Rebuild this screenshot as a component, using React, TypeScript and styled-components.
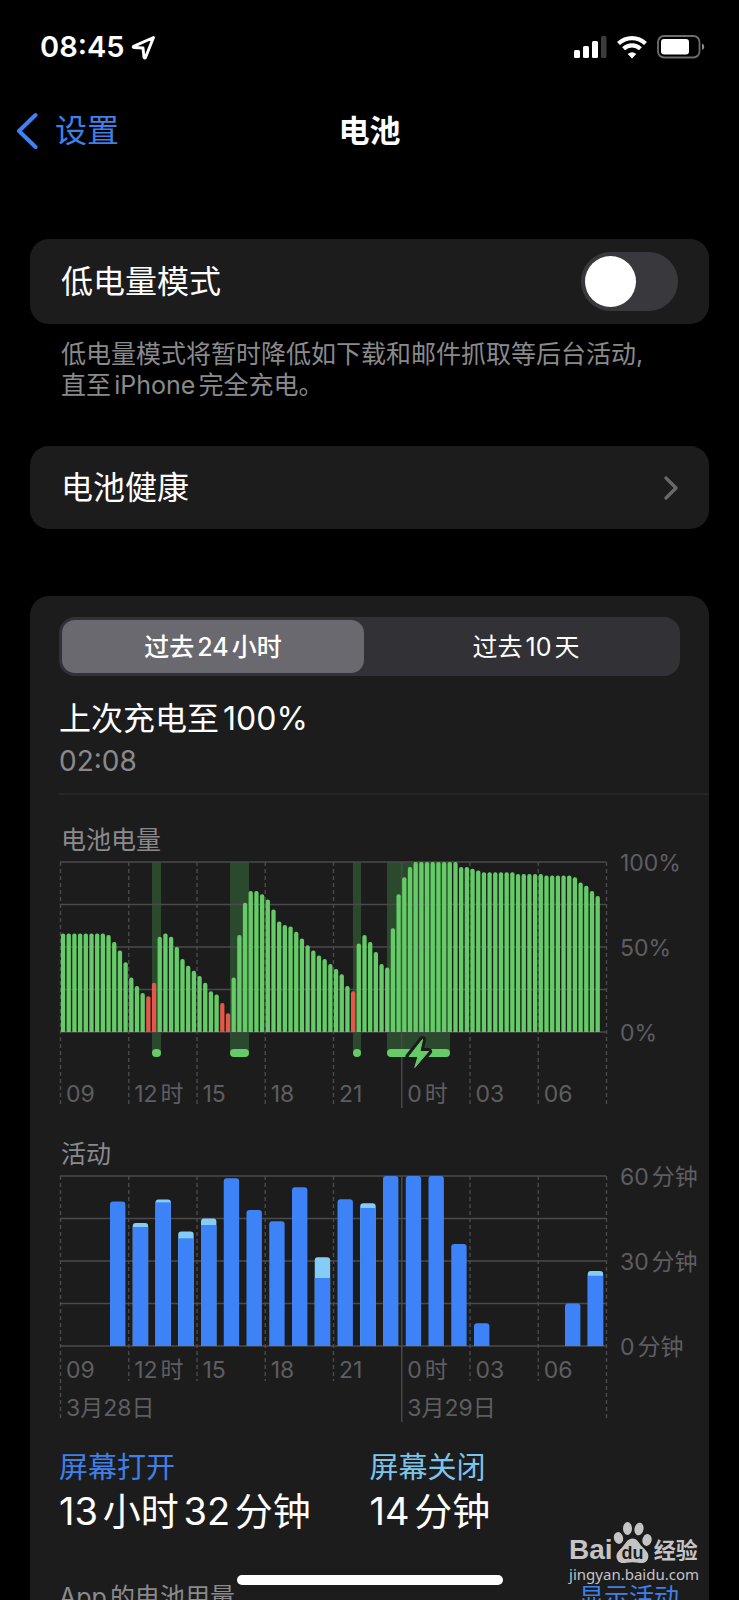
import React, { useState } from 'react';
import styled, { createGlobalStyle } from 'styled-components';

const GlobalStyle = createGlobalStyle`
  *, *::before, *::after { box-sizing: border-box; }
  html, body { margin: 0; background: #000; }
  body, button, input {
    font-family: Inter, "Noto Sans CJK SC", sans-serif;
  }
  button { border: 0; padding: 0; background: none; color: inherit; cursor: pointer; }
  a { text-decoration: none; color: inherit; }
`;

const color = {
  card: '#1c1c1d',
  text: '#ffffff',
  muted: '#8a8a8d',
  axis: '#5e5e61',
  grid: '#4a4a4c',
  blue: '#3d83f7',
  link: '#3f80e8',
  cyan: '#84cdf8',
  green: '#65cb67',
  band: '#2b4a2d',
  red: '#e4584a',
};

const Screen = styled.div`
  position: relative;
  height: 100vh;
  overflow: hidden;
  background: #000;
  color: ${color.text};
  text-autospace: normal;
`;

const StatusBar = styled.div`
  display: flex;
  align-items: center;
  justify-content: space-between;
  height: 94px;
  padding: 0 34px 0 40px;
`;

const Clock = styled.div`
  display: flex;
  align-items: center;
  gap: 6px;
  font-size: 29px;
  line-height: 44px;
  font-weight: 600;
`;

const StatusIcons = styled.div`
  display: flex;
  align-items: center;
  gap: 10px;
`;

const NavBar = styled.header`
  display: grid;
  grid-template-columns: 1fr auto 1fr;
  align-items: center;
  height: 74px;
  padding: 0 16px;
`;

const BackLink = styled.a`
  display: flex;
  align-items: center;
  gap: 17px;
  font-size: 32px;
  line-height: 44px;
  && { color: ${color.link}; }
`;

const PageTitle = styled.h1`
  margin: 0;
  font-size: 31px;
  line-height: 44px;
  font-weight: 600;
`;

const Content = styled.main`
  padding: 71px 30px 0;
`;

const Card = styled.section`
  border-radius: 19px;
  background: ${color.card};
`;

const SwitchRow = styled.label`
  display: flex;
  align-items: center;
  justify-content: space-between;
  height: 85px;
  padding: 0 31px;
  font-size: 32px;
  line-height: 44px;
`;

const Switch = styled.input`
  appearance: none;
  display: flex;
  width: 97px;
  height: 59px;
  margin: 0;
  padding: 4px;
  border-radius: 30px;
  background: #39393d;
  cursor: pointer;

  &::before {
    content: '';
    width: 51px;
    height: 51px;
    border-radius: 50%;
    background: #fff;
  }
  &:checked { background: ${color.green}; justify-content: flex-end; }
`;

const Footnote = styled.p`
  margin: 15px 31px 45px;
  font-size: 25px;
  line-height: 31px;
  color: ${color.muted};
`;

const LinkRow = styled.a`
  display: flex;
  align-items: center;
  justify-content: space-between;
  height: 83px;
  padding: 0 31px;
  font-size: 32px;
  line-height: 44px;
`;

const UsageCard = styled(Card)`
  margin-top: 67px;
  padding: 21px 0 40px 29px;
`;

const Segments = styled.div`
  display: grid;
  grid-template-columns: 1fr 1fr;
  gap: 11px;
  height: 59px;
  margin-right: 29px;
  padding: 3px;
  border-radius: 16px;
  background: #323236;
`;

const Segment = styled.button<{ $active: boolean }>`
  border-radius: 13px;
  font-size: 25px;
  line-height: 30px;
  font-weight: ${p => (p.$active ? 500 : 400)};
  background: ${p => (p.$active ? '#6a696f' : 'transparent')};
  text-autospace: normal;
`;

const LastCharge = styled.div`
  margin-top: 22px;
  padding-bottom: 11px;
  border-bottom: 2px solid #262628;
  line-height: 42px;
`;

const ChargeTitle = styled.div`
  font-size: 32px;
`;

const ChargeTime = styled.div`
  font-size: 28px;
  color: ${color.muted};
`;

const ChartTitle = styled.h2<{ $gap: number }>`
  margin: ${p => p.$gap}px 0 0 2px;
  font-size: 25px;
  line-height: 30px;
  font-weight: 400;
  color: ${color.muted};
`;

const ChartSvg = styled.svg`
  display: block;
  width: 100%;
  height: auto;
  overflow: visible;
  text {
    font-family: Inter, "Noto Sans CJK SC", sans-serif;
    font-size: 23px;
    fill: ${color.axis};
  }
`;

const DayLabel = styled.text`
  text-autospace: no-autospace;
`;

const Totals = styled.div`
  display: grid;
  grid-template-columns: 1fr 1fr;
  margin: 19px 29px 0 0;
`;

const TotalLabel = styled.div<{ $tone: string }>`
  font-size: 29px;
  line-height: 40px;
  color: ${p => p.$tone};
`;

const TotalValue = styled.div`
  font-size: 38px;
  line-height: 46px;
`;

const ListHeader = styled.div`
  display: flex;
  justify-content: space-between;
  margin: 48px 30px 0 0;
  font-size: 25px;
  line-height: 30px;
  color: ${color.muted};
`;

const TextButton = styled.button`
  font-size: 25px;
  line-height: 30px;
  color: ${color.link};
`;

const HomeIndicator = styled.div`
  position: absolute;
  left: 50%;
  bottom: 15px;
  width: 36%;
  height: 10px;
  border-radius: 5px;
  background: #fff;
  transform: translateX(-50%);
`;

const Watermark = styled.div`
  position: absolute;
  right: 40px;
  bottom: 16px;
  color: #c4c4c4;
`;

const WatermarkLogo = styled.div`
  display: flex;
  align-items: flex-end;
  line-height: 28px;
  font-weight: 700;
`;

const LogoLatin = styled.span`
  font-family: "Liberation Sans", sans-serif;
  font-size: 28px;
`;

const LogoHan = styled.span`
  margin-left: 2px;
  font-size: 22px;
`;

const WatermarkUrl = styled.div`
  font-family: "Noto Sans", sans-serif;
  font-size: 15px;
  line-height: 20px;
`;

const PLOT_LEFT = 1;
const PLOT_WIDTH = 546;
const PLOT_HEIGHT = 170;
const TICK = PLOT_WIDTH / 8;
const HOURS = ['09', '12时', '15', '18', '21', '0时', '03', '06'];

const LEVELS = [
  58, 58, 58, 58, 58, 58, 58, 58, 57, 53, 48, 41, 32, 27, 23, 21, 29, 56, 58, 56, 50, 43, 39, 36,
  33, 29, 24, 22, 17, 11, 32, 57, 76, 83, 83, 81, 78, 72, 65, 63, 62, 59, 55, 51, 48, 45, 43, 40,
  37, 34, 27, 24, 52, 57, 53, 47, 40, 38, 61, 81, 91, 97, 100, 100, 100, 100, 100, 100, 100, 100,
  97, 97, 96, 95, 94, 94, 94, 94, 94, 94, 93, 93, 93, 93, 93, 92, 92, 92, 92, 92, 91, 88, 86, 83, 80,
];
const LOW = new Set([15, 16, 28, 29, 51]);

const CHARGES = [
  { x: 93, width: 9 },
  { x: 171, width: 19 },
  { x: 294, width: 8 },
  { x: 328, width: 63 },
];

// Minutes per hour slot: total, and the part with the screen on.
const ACTIVITY: [slot: number, total: number, on: number][] = [
  [2, 51, 51], [3, 43.4, 42], [4, 51.7, 50.7], [5, 40.4, 38], [6, 45, 42.7], [7, 59.2, 59.2],
  [8, 48, 48], [9, 44, 44], [10, 56, 56], [11, 31.3, 24], [12, 51.8, 51.8], [13, 50.4, 48.7],
  [14, 60, 60], [15, 60, 60], [16, 60, 60], [17, 36, 36], [18, 8, 8], [22, 15, 15], [23, 26.5, 24.8],
];

function roundedTop(x: number, y: number, w: number, h: number, r: number) {
  return `M${x} ${y + h}V${y + r}q0 ${-r} ${r} ${-r}h${w - 2 * r}q${r} 0 ${r} ${r}V${y + h}z`;
}

function Grid({ top, tickEnd, edgeEnd, dayEnd }: { top: number; tickEnd: number; edgeEnd: number; dayEnd: number }) {
  return (
    <g stroke={color.grid} strokeWidth={1.4}>
      {[0, 1, 2, 3, 4].map(i => (
        <line
          key={i}
          x1={PLOT_LEFT}
          x2={PLOT_LEFT + PLOT_WIDTH}
          y1={top + (i * PLOT_HEIGHT) / 4}
          y2={top + (i * PLOT_HEIGHT) / 4}
        />
      ))}
      {Array.from({ length: 9 }, (_, i) => {
        const x = PLOT_LEFT + 0.5 + i * TICK;
        const end = i === 5 ? dayEnd : i === 0 || i === 8 ? edgeEnd : tickEnd;
        return <line key={i} x1={x} x2={x} y1={top} y2={end} strokeDasharray={i === 5 ? undefined : '4 3'} />;
      })}
    </g>
  );
}

function HourLabels({ y }: { y: number }) {
  return (
    <>
      {HOURS.map((h, i) => (
        <text key={h} x={PLOT_LEFT + 6 + i * TICK} y={y}>{h}</text>
      ))}
    </>
  );
}

function ValueLabels({ top, labels }: { top: number; labels: string[] }) {
  return (
    <>
      {labels.map((l, i) => (
        <text key={l} x={561} y={top + 9 + (i * PLOT_HEIGHT) / 2}>{l}</text>
      ))}
    </>
  );
}

function BatteryChart() {
  const top = 7;
  const base = top + PLOT_HEIGHT;
  return (
    <ChartSvg viewBox="0 0 650 260" role="img" aria-label="电池电量">
      {CHARGES.map(c => (
        <rect key={c.x} x={c.x} y={top} width={c.width} height={base - top + 21} fill={color.band} />
      ))}
      <Grid top={top} tickEnd={250} edgeEnd={250} dayEnd={253} />
      {LEVELS.map((v, i) => {
        const h = (v / 100) * PLOT_HEIGHT;
        return (
          <path
            key={i}
            d={roundedTop(PLOT_LEFT + 0.9 + (i * TICK) / 12, base - h, 4.3, h, 2)}
            fill={LOW.has(i) ? color.red : color.green}
          />
        );
      })}
      {CHARGES.map(c => (
        <rect key={c.x} x={c.x} y={194} width={c.width} height={8} rx={4} fill={color.green} />
      ))}
      <path
        d="M363.5 184.5L350 201.500h9l-3.200 11L369.500 196.500h-8.500z"
        fill={color.green}
        stroke={color.card}
        strokeWidth={7}
        strokeLinejoin="round"
      />
      <path
        d="M363.5 184.5L350 201.500h9l-3.200 11L369.500 196.500h-8.500z"
        fill={color.green}
        stroke={color.green}
        strokeWidth={1}
        strokeLinejoin="round"
      />
      <HourLabels y={247} />
      <ValueLabels top={top} labels={['100%', '50%', '0%']} />
    </ChartSvg>
  );
}

function ActivityChart() {
  const top = 7;
  const base = top + PLOT_HEIGHT;
  const scale = PLOT_HEIGHT / 60;
  return (
    <ChartSvg viewBox="0 0 650 260" role="img" aria-label="活动">
      <Grid top={top} tickEnd={212} edgeEnd={249} dayEnd={253} />
      {ACTIVITY.map(([slot, total, on]) => {
        const x = PLOT_LEFT + 4.5 + (slot * TICK) / 3;
        return (
          <g key={slot}>
            <path
              d={roundedTop(x, base - total * scale, 15.4, total * scale, 3)}
              fill={total > on ? color.cyan : color.blue}
            />
            {total > on && (
              <rect x={x} y={base - on * scale} width={15.4} height={on * scale} fill={color.blue} />
            )}
          </g>
        );
      })}
      <HourLabels y={209} />
      <DayLabel x={PLOT_LEFT + 6} y={247}>3月28日</DayLabel>
      <DayLabel x={PLOT_LEFT + 6 + 5 * TICK} y={247}>3月29日</DayLabel>
      <ValueLabels top={top} labels={['60分钟', '30分钟', '0分钟']} />
    </ChartSvg>
  );
}

function LocationIcon() {
  return (
    <svg width="25" height="25" viewBox="0 0 25 25" aria-hidden="true">
      <path
        d="M22.5 2.500L2.500 11.300Q1.800 12.300 3 12.500L12 13L13 22.300Q13.600 23.600 14.500 22.500z"
        fill="none"
        stroke="#fff"
        strokeWidth="2.900"
        strokeLinejoin="round"
      />
    </svg>
  );
}

function SignalIcon() {
  return (
    <svg width="33" height="24" viewBox="0 0 33 24" aria-hidden="true">
      <g fill="#fff">
        <rect x="0" y="15" width="6" height="8" rx="1.500" />
        <rect x="9" y="11" width="6" height="12" rx="1.500" />
        <rect x="18" y="6" width="6" height="17" rx="1.500" />
      </g>
      <rect x="27" y="1" width="5.500" height="22" rx="1.500" fill="#3b3b3d" />
    </svg>
  );
}

function WifiIcon() {
  return (
    <svg width="30" height="24" viewBox="0 0 30 24" aria-hidden="true">
      <g fill="none" stroke="#fff" strokeWidth="4.200">
        <path d="M1.500 8.500C9 1.200 21 1.200 28.500 8.500" />
        <path d="M6.600 13.800C11.300 9.300 18.700 9.300 23.400 13.800" />
      </g>
      <path d="M15 23.500l-4.300-4.500Q15 15.300 19.300 19z" fill="#fff" />
    </svg>
  );
}

function BatteryIcon() {
  return (
    <svg width="48" height="24" viewBox="0 0 48 24" aria-hidden="true">
      <rect x="1" y="1" width="41.500" height="21.500" rx="6" fill="none" stroke="#6d6d6f" strokeWidth="1.800" />
      <rect x="4" y="4" width="28" height="15.500" rx="3" fill="#fff" />
      <path d="M45 8.500q2.300 1 2.300 3.300t-2.300 3.300z" fill="#8a8a8c" />
    </svg>
  );
}

function PawIcon() {
  return (
    <svg width="39" height="43" viewBox="0 0 39 43" aria-hidden="true">
      <g fill="#c4c4c4">
        <ellipse cx="5.500" cy="17" rx="4.600" ry="6" transform="rotate(-12 5.500 17)" />
        <ellipse cx="14.500" cy="7.500" rx="4.500" ry="6.500" />
        <ellipse cx="26" cy="8" rx="4.500" ry="6.300" transform="rotate(12 26 8)" />
        <ellipse cx="34" cy="19" rx="4.600" ry="6" transform="rotate(12 34 19)" />
        <path d="M19.500 17.500c5 0 6.500 5 10 8.500 4.500 4.500 7 7 5.500 11.500-1.500 4.800-6 5-9.500 4.300-4-.8-8-.8-12 0-4 .8-8.500.3-9.700-4.300C2.500 33 5 30.500 9 26.500c3.500-3.700 5.500-9 10.500-9z" />
      </g>
      <text
        x="19.500"
        y="38"
        textAnchor="middle"
        fontFamily="Liberation Sans, sans-serif"
        fontWeight="700"
        fontSize="18"
        fill={color.card}
      >
        du
      </text>
    </svg>
  );
}

export default function App() {
  const [lowPower, setLowPower] = useState(false);
  const [range, setRange] = useState(0);

  return (
    <Screen>
      <GlobalStyle />
      <StatusBar>
        <Clock>
          08:45
          <LocationIcon />
        </Clock>
        <StatusIcons>
          <SignalIcon />
          <WifiIcon />
          <BatteryIcon />
        </StatusIcons>
      </StatusBar>

      <NavBar>
        <BackLink href="#settings">
          <svg width="22" height="38" viewBox="0 0 22 38" fill="none" aria-hidden="true">
            <path d="M19.500 3L3 19l16.500 16" stroke={color.blue} strokeWidth="4" strokeLinecap="round" strokeLinejoin="round" />
          </svg>
          设置
        </BackLink>
        <PageTitle>电池</PageTitle>
      </NavBar>

      <Content>
        <Card>
          <SwitchRow>
            低电量模式
            <Switch type="checkbox" role="switch" checked={lowPower} onChange={e => setLowPower(e.target.checked)} />
          </SwitchRow>
        </Card>
        <Footnote>
          低电量模式将暂时降低如下载和邮件抓取等后台活动,
          <br />
          直至iPhone完全充电。
        </Footnote>

        <Card>
          <LinkRow href="#health">
            电池健康
            <svg width="14" height="24" viewBox="0 0 14 24" fill="none" aria-hidden="true">
              <path d="M2 2l10 10L2 22" stroke="#69696b" strokeWidth="3.200" strokeLinecap="round" strokeLinejoin="round" />
            </svg>
          </LinkRow>
        </Card>

        <UsageCard>
          <Segments>
            {['过去24小时', '过去10天'].map((label, i) => (
              <Segment key={label} type="button" $active={range === i} aria-pressed={range === i} onClick={() => setRange(i)}>
                {label}
              </Segment>
            ))}
          </Segments>

          <LastCharge>
            <ChargeTitle>上次充电至100%</ChargeTitle>
            <ChargeTime>02:08</ChargeTime>
          </LastCharge>

          <ChartTitle $gap={30}>电池电量</ChartTitle>
          <BatteryChart />
          <ChartTitle $gap={24}>活动</ChartTitle>
          <ActivityChart />

          <Totals>
            <div>
              <TotalLabel $tone={color.link}>屏幕打开</TotalLabel>
              <TotalValue>13小时32分钟</TotalValue>
            </div>
            <div>
              <TotalLabel $tone="#7cc4ea">屏幕关闭</TotalLabel>
              <TotalValue>14分钟</TotalValue>
            </div>
          </Totals>

          <ListHeader>
            <span>App的电池用量</span>
            <TextButton type="button">显示活动</TextButton>
          </ListHeader>
        </UsageCard>
      </Content>

      <Watermark>
        <WatermarkLogo>
          <LogoLatin>Bai</LogoLatin>
          <PawIcon />
          <LogoHan>经验</LogoHan>
        </WatermarkLogo>
        <WatermarkUrl>jingyan.baidu.com</WatermarkUrl>
      </Watermark>
      <HomeIndicator />
    </Screen>
  );
}
